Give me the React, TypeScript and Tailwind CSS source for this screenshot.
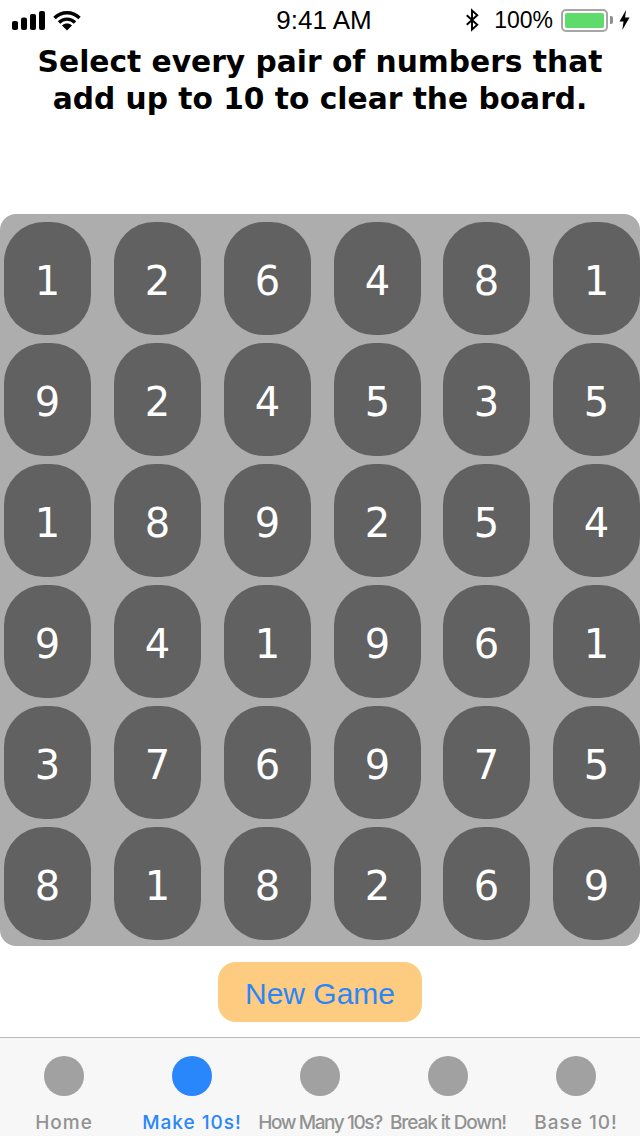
const board = [
  [1, 2, 6, 4, 8, 1],
  [9, 2, 4, 5, 3, 5],
  [1, 8, 9, 2, 5, 4],
  [9, 4, 1, 9, 6, 1],
  [3, 7, 6, 9, 7, 5],
  [8, 1, 8, 2, 6, 9],
];

const tabs = [
  { label: 'Home', tracking: 'tracking-[1px]' },
  { label: 'Make 10s!', active: true, tracking: 'tracking-[1px]' },
  { label: 'How Many 10s?', tracking: 'tracking-[-1.4px]' },
  { label: 'Break it Down!', tracking: 'tracking-[-1.1px]' },
  { label: 'Base 10!', tracking: 'tracking-[1px]' },
];

function StatusBar() {
  return (
    <div className="h-10 flex items-center justify-between pl-3 pr-[10px] text-[23px] text-black font-['Liberation_Sans',sans-serif]">
      <div className="w-[206px] flex items-center gap-2">
        <svg width="33" height="19" viewBox="0 0 33 19" fill="black">
          <rect x="0" y="10" width="6" height="9" rx="2" />
          <rect x="9" y="6.5" width="6" height="12.5" rx="2" />
          <rect x="18" y="3" width="6" height="16" rx="2" />
          <rect x="27" y="0" width="6" height="19" rx="2" />
        </svg>
        <svg width="28" height="21" viewBox="0 0 28 21" fill="none" stroke="black" strokeWidth="3.4">
          <path d="M1.5 8C8.5 1 19.5 1 26.5 8" />
          <path d="M6 12.5C10.5 8 17.5 8 22 12.5" />
          <path d="M14 20.5L9 15.4C12 13 16 13 19 15.4Z" fill="black" stroke="none" />
        </svg>
      </div>
      <span className="text-[26px]">9:41 AM</span>
      <div className="w-[200px] flex items-center justify-end">
        <svg width="14" height="24" viewBox="0 0 16 26" fill="none" stroke="black" strokeWidth="2.2" className="mr-[15px]">
          <path d="M2 7.5L14 18.5L8 24V2L14 7.5L2 18.5" />
        </svg>
        <span className="mr-2">100%</span>
        <div className="w-[47px] h-[23px] rounded-[5px] border-2 border-[#a6a6a6] p-[2px]">
          <div className="w-full h-full rounded-[2px] bg-[#5fdb6c]" />
        </div>
        <div className="w-[3px] h-[8px] bg-[#8e8e8e] rounded-r-[2px] ml-[2px] mr-[6px]" />
        <svg width="11" height="20" viewBox="0 0 10 20" fill="black">
          <path d="M6.5 0L0 11.5H4L2.8 20L10 7.5H5.6Z" />
        </svg>
      </div>
    </div>
  );
}

export default function App() {
  return (
    <div className="w-[640px] h-[1136px] bg-white flex flex-col overflow-hidden">
      <StatusBar />
      <h1 className="h-[174px] text-center text-[29.7px] leading-[37px] pt-[3px] font-bold text-black font-['DejaVu_Sans',sans-serif]">
        Select every pair of numbers that
        <br />
        add up to 10 to clear the board.
      </h1>

      <div className="h-[732px] rounded-[16px] bg-[#adadad] pt-2 pl-1 flex flex-col gap-2">
        {board.map((row, r) => (
          <div key={r} className="grid grid-cols-[110px_110px_110px_109px_110px_87px]">
            {row.map((n, c) => (
              <div
                key={c}
                className="w-[87px] h-[113px] pt-1 rounded-[40px] bg-[#616161] text-white text-[40px] flex items-center justify-center font-['DejaVu_Sans',sans-serif]"
              >
                {n}
              </div>
            ))}
          </div>
        ))}
      </div>

      <div className="h-[91px] pt-4 flex justify-center">
        <button className="w-[204px] h-[60px] pt-[3px] rounded-[18px] bg-[#fdcc80] text-[#2a86fb] text-[30px] font-['Liberation_Sans',sans-serif]">
          New Game
        </button>
      </div>

      <div className="flex-1 border-t border-[#b8b8b8] bg-[#f7f7f7] flex">
        {tabs.map((t) => (
          <div key={t.label} className="w-[128px] flex flex-col items-center pt-[18px]">
            <div className={`w-10 h-10 rounded-full ${t.active ? 'bg-[#2a86fb]' : 'bg-[#a1a1a1]'}`} />
            <span
              className={`mt-[14px] text-[19px] leading-[26px] whitespace-nowrap font-['Inter',sans-serif] ${t.tracking} ${t.active ? 'text-[#2a86fb] font-medium' : 'text-[#929292] font-medium'}`}
            >
              {t.label}
            </span>
          </div>
        ))}
      </div>
    </div>
  );
}
